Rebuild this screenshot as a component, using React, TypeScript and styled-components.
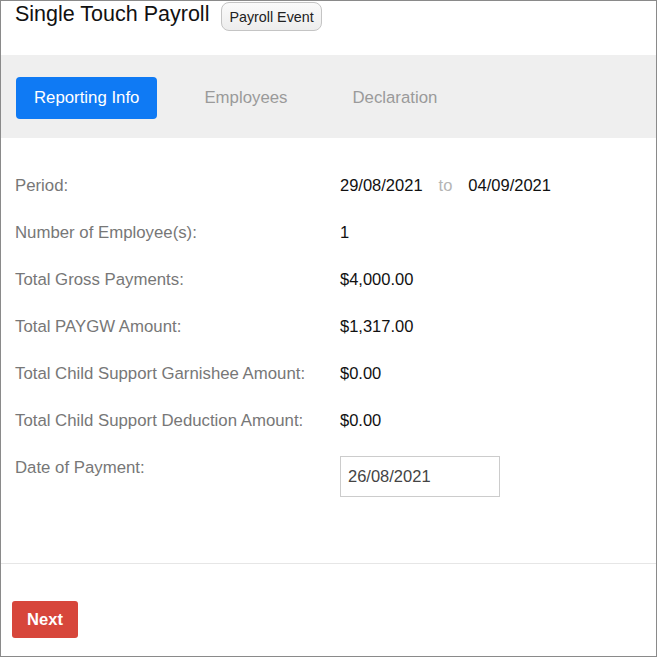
import React, { ReactElement } from 'react';
import styled, { createGlobalStyle } from 'styled-components';

const GlobalStyle = createGlobalStyle`
  html, body {
    margin: 0;
    padding: 0;
    background: #ffffff;
    font-family: "Liberation Sans", Arial, sans-serif;
  }
`;

const Frame = styled.div`
  width: 657px;
  height: 657px;
  box-sizing: border-box;
  border: 1px solid #8a8a8a;
  display: flex;
  flex-direction: column;
  background: #ffffff;
`;

const Header = styled.div`
  height: 54px;
  display: flex;
  align-items: flex-start;
  padding-left: 14px;
  box-sizing: border-box;
`;

const Title = styled.h1`
  margin: 0;
  padding-top: 1px;
  font-size: 21.5px;
  font-weight: normal;
  color: #111111;
  line-height: 24px;
`;

const Badge = styled.span`
  margin-left: 12px;
  margin-top: 1px;
  height: 29px;
  box-sizing: border-box;
  padding: 0 7px;
  display: inline-flex;
  align-items: center;
  border: 1px solid #c4c4c4;
  border-radius: 8px;
  background: linear-gradient(#fafafa, #ededed);
  font-size: 14.3px;
  color: #222222;
`;

const TabBand = styled.div`
  height: 83px;
  background: #efefef;
  display: flex;
  align-items: flex-start;
  gap: 29px;
  padding: 22px 15px 0;
  box-sizing: border-box;
`;

const Tab = styled.button<{ $active?: boolean }>`
  height: 42px;
  padding: 0 18px;
  border: none;
  border-radius: 4px;
  font-family: inherit;
  font-size: 16.8px;
  cursor: pointer;
  background: ${(props) => (props.$active ? '#0f7af4' : 'transparent')};
  color: ${(props) => (props.$active ? '#ffffff' : '#9a9a9a')};
`;

const Content = styled.div`
  flex: 1;
  padding: 24px 0 0 14px;
  border-bottom: 1px solid #e6e6e6;
`;

const Row = styled.div`
  display: flex;
  align-items: flex-start;
  min-height: 47px;
`;

const Label = styled.div`
  width: 325px;
  line-height: 47px;
  font-size: 16.8px;
  color: #777777;
`;

const Value = styled.div`
  line-height: 47px;
  font-size: 16.5px;
  color: #111111;
  display: flex;
  gap: 16px;
`;

const Muted = styled.span`
  color: #b5b5b5;
`;

const DateInput = styled.input`
  margin-top: 12px;
  width: 160px;
  height: 41px;
  box-sizing: border-box;
  border: 1px solid #cccccc;
  padding: 0 7px;
  font-family: inherit;
  font-size: 16.5px;
  color: #444444;
  outline: none;
`;

const Footer = styled.div`
  height: 92px;
  padding: 37px 0 0 11px;
  box-sizing: border-box;
`;

const NextButton = styled.button`
  width: 66px;
  height: 37px;
  border: none;
  border-radius: 3px;
  background: #d7463b;
  color: #ffffff;
  font-family: inherit;
  font-size: 16.5px;
  font-weight: bold;
  cursor: pointer;
`;

const rows: { label: string; value: string }[] = [
  { label: 'Number of Employee(s):', value: '1' },
  { label: 'Total Gross Payments:', value: '$4,000.00' },
  { label: 'Total PAYGW Amount:', value: '$1,317.00' },
  { label: 'Total Child Support Garnishee Amount:', value: '$0.00' },
  { label: 'Total Child Support Deduction Amount:', value: '$0.00' },
];

export default function App(): ReactElement {
  return (
    <>
      <GlobalStyle />
      <Frame>
        <Header>
          <Title>Single Touch Payroll</Title>
          <Badge>Payroll Event</Badge>
        </Header>

        <TabBand>
          <Tab $active>Reporting Info</Tab>
          <Tab>Employees</Tab>
          <Tab>Declaration</Tab>
        </TabBand>

        <Content>
          <Row>
            <Label>Period:</Label>
            <Value>
              <span>29/08/2021</span>
              <Muted>to</Muted>
              <span>04/09/2021</span>
            </Value>
          </Row>
          {rows.map((row) => (
            <Row key={row.label}>
              <Label>{row.label}</Label>
              <Value>{row.value}</Value>
            </Row>
          ))}
          <Row>
            <Label>Date of Payment:</Label>
            <DateInput defaultValue="26/08/2021" />
          </Row>
        </Content>

        <Footer>
          <NextButton>Next</NextButton>
        </Footer>
      </Frame>
    </>
  );
}
